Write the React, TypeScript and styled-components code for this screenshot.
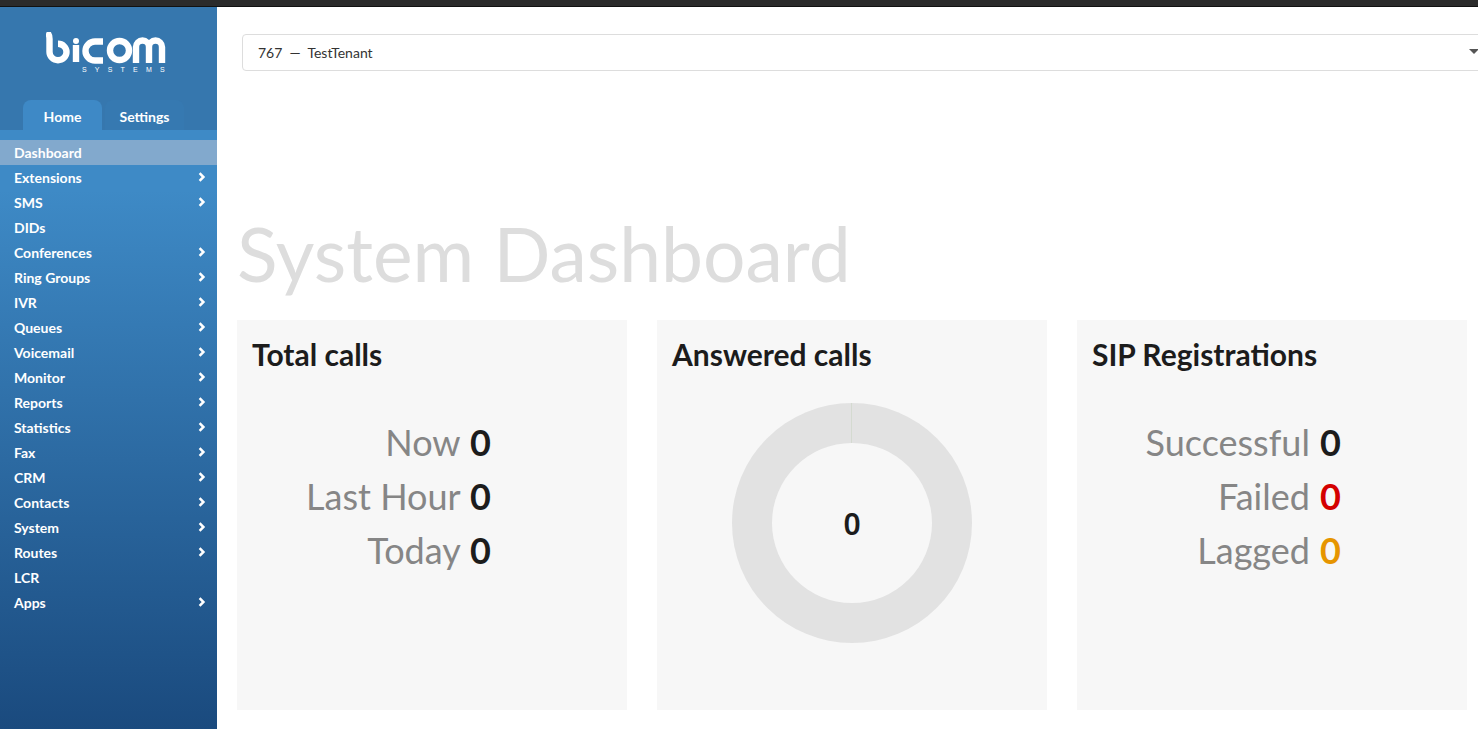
import styled, { createGlobalStyle } from 'styled-components'

const menu = [
  { label: 'Dashboard', active: true },
  { label: 'Extensions', sub: true },
  { label: 'SMS', sub: true },
  { label: 'DIDs' },
  { label: 'Conferences', sub: true },
  { label: 'Ring Groups', sub: true },
  { label: 'IVR', sub: true },
  { label: 'Queues', sub: true },
  { label: 'Voicemail', sub: true },
  { label: 'Monitor', sub: true },
  { label: 'Reports', sub: true },
  { label: 'Statistics', sub: true },
  { label: 'Fax', sub: true },
  { label: 'CRM', sub: true },
  { label: 'Contacts', sub: true },
  { label: 'System', sub: true },
  { label: 'Routes', sub: true },
  { label: 'LCR' },
  { label: 'Apps', sub: true },
]

function Logo() {
  return (
    <svg width="120" height="32" viewBox="0 0 120 32" fill="none" stroke="#fff" strokeWidth="6.4">
      <path d="M0.5 0.5 C3 1.5 3.5 4 3.5 7 V20 A8.5 8.2 0 1 0 12 11.8" />
      <path d="M30 13 V30" />
      <circle cx="30" cy="9" r="3" fill="#fff" stroke="none" />
      <path d="M57 9.5 H49 A9.5 9.5 0 0 0 49 28.5 H57" />
      <circle cx="73.5" cy="18.5" r="9.5" />
      <path d="M90 31 V15 A6.5 6.5 0 0 1 103 15 V31 M103 15 A6.5 6.5 0 0 1 116 15 V31" />
    </svg>
  )
}

function Chevron() {
  return (
    <svg width="8" height="10" viewBox="0 0 8 10">
      <path d="M1.6 1.2 L5.4 5 L1.6 8.8" fill="none" stroke="#fff" strokeWidth="2.5" />
    </svg>
  )
}

export default function App() {
  return (
    <>
      <GlobalStyle />
      <TopBar />
      <Shell>
        <Sidebar>
          <Brand>
            <Logo />
            <BrandSub>SYSTEMS</BrandSub>
          </Brand>
          <Tabs>
            <Tab $active>Home</Tab>
            <Tab>Settings</Tab>
          </Tabs>
          <Nav>
            {menu.map((item) => (
              <NavItem key={item.label} $active={item.active}>
                {item.label}
                {item.sub && <Chevron />}
              </NavItem>
            ))}
          </Nav>
        </Sidebar>
        <Main>
          <TenantSelect>
            767&nbsp; —&nbsp; TestTenant
            <SelectArrow />
          </TenantSelect>
          <PageTitle>System Dashboard</PageTitle>
          <Cards>
            <Card>
              <CardTitle>Total calls</CardTitle>
              <Stats $right={135}>
                <Stat>Now <Value>0</Value></Stat>
                <Stat>Last Hour <Value>0</Value></Stat>
                <Stat>Today <Value>0</Value></Stat>
              </Stats>
            </Card>
            <Card>
              <CardTitle>Answered calls</CardTitle>
              <Donut>
                <DonutTick />
                <DonutHole>0</DonutHole>
              </Donut>
            </Card>
            <Card>
              <CardTitle>SIP Registrations</CardTitle>
              <Stats $right={125}>
                <Stat>Successful <Value>0</Value></Stat>
                <Stat>Failed <Value $color="#d40000">0</Value></Stat>
                <Stat>Lagged <Value $color="#e69500">0</Value></Stat>
              </Stats>
            </Card>
          </Cards>
        </Main>
      </Shell>
    </>
  )
}

const GlobalStyle = createGlobalStyle`
  html, body {
    margin: 0;
    height: 100%;
    overflow: hidden;
    background: #fff;
    font-family: Lato, "Liberation Sans", sans-serif;
  }
`

const TopBar = styled.div`
  height: 6px;
  background: #2b2b2b;
  border-bottom: 1px solid #111;
`

const Shell = styled.div`
  display: flex;
  height: 722px;
`

const Sidebar = styled.aside`
  width: 217px;
  flex-shrink: 0;
  display: flex;
  flex-direction: column;
  background: #3677ae;
`

const Brand = styled.div`
  height: 93px;
  box-sizing: border-box;
  padding: 25px 0 0 46px;
  display: flex;
  flex-direction: column;
  align-items: flex-start;

  svg {
    display: block;
  }
`

const BrandSub = styled.span`
  width: 120px;
  margin-top: 3px;
  padding-left: 36px;
  box-sizing: border-box;
  font-family: "Liberation Sans", sans-serif;
  font-size: 7px;
  line-height: 6px;
  letter-spacing: 8.2px;
  color: #fff;
  white-space: nowrap;
`

const Tabs = styled.div`
  height: 30px;
  display: flex;
  gap: 3px;
  padding-left: 23px;
`

const Tab = styled.div<{ $active?: boolean }>`
  width: 79px;
  display: flex;
  align-items: center;
  justify-content: center;
  padding-top: 2px;
  box-sizing: border-box;
  border-radius: 8px 8px 0 0;
  background: ${({ $active }) => ($active ? '#3e89c6' : '#3679b1')};
  color: #fff;
  font-size: 14px;
  font-weight: 700;
`

const Nav = styled.nav`
  flex: 1;
  padding-top: 10px;
  background: linear-gradient(#3e8ac6 10%, #1a4a7e 100%);
`

const NavItem = styled.div<{ $active?: boolean }>`
  height: 25px;
  display: flex;
  align-items: center;
  justify-content: space-between;
  padding: 0 11px 0 14px;
  background: ${({ $active }) => ($active ? '#82a9cd' : 'transparent')};
  color: #fff;
  font-size: 14px;
  font-weight: 700;

  svg {
    margin-top: -2px;
  }
`

const Main = styled.main`
  flex: 1;
  min-width: 0;
  padding-left: 20px;
`

const TenantSelect = styled.div`
  position: relative;
  width: 1240px;
  height: 37px;
  margin: 27px 0 0 5px;
  padding-left: 15px;
  box-sizing: border-box;
  display: flex;
  align-items: center;
  border: 1px solid #ddd;
  border-radius: 4px;
  color: #333;
  font-size: 14px;
`

const SelectArrow = styled.span`
  position: absolute;
  right: 2px;
  top: 14px;
  border-style: solid;
  border-width: 5px 5px 0;
  border-color: #555 transparent transparent;
`

const PageTitle = styled.h1`
  margin: 142px 0 0;
  height: 104px;
  font-size: 75px;
  line-height: 80px;
  font-weight: 400;
  color: #ddd;
  white-space: nowrap;
`

const Cards = styled.div`
  display: grid;
  grid-template-columns: repeat(3, 390px);
  gap: 30px;
  margin-top: 3px;
`

const Card = styled.section`
  height: 390px;
  box-sizing: border-box;
  padding: 14px 15px 15px;
  background: #f7f7f7;
`

const CardTitle = styled.h2`
  margin: 0;
  font-size: 30px;
  line-height: 40px;
  font-weight: 700;
  color: #1c1c1c;
`

const Stats = styled.div<{ $right: number }>`
  margin: 41px ${({ $right }) => $right - 15}px 0 0;
  text-align: right;
`

const Stat = styled.div`
  font-size: 36px;
  line-height: 54px;
  color: #868686;
`

const Value = styled.b<{ $color?: string }>`
  margin: 0 1px;
  font-weight: 700;
  color: ${({ $color }) => $color ?? '#1c1c1c'};
`

const Donut = styled.div`
  position: relative;
  width: 240px;
  height: 240px;
  margin: 29px auto 0;
  border-radius: 50%;
  background: #e2e2e2;
  display: flex;
  align-items: center;
  justify-content: center;
`

const DonutTick = styled.span`
  position: absolute;
  top: 0;
  left: 119px;
  width: 1px;
  height: 40px;
  background: #d4dad0;
`

const DonutHole = styled.div`
  width: 160px;
  height: 160px;
  border-radius: 50%;
  background: #f7f7f7;
  display: flex;
  align-items: center;
  justify-content: center;
  font-family: "Noto Sans", sans-serif;
  font-size: 30px;
  font-weight: 600;
  color: #1c1c1c;
`
